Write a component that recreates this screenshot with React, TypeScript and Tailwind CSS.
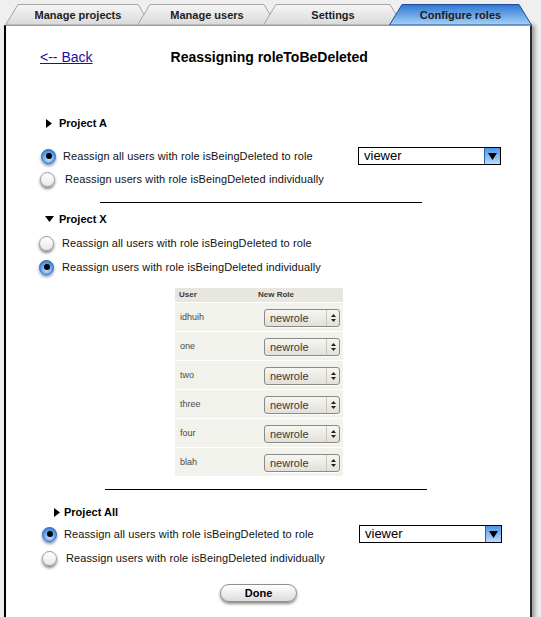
import React from 'react';

const sans = "font-['Liberation_Sans',Arial,sans-serif]";

function Tab({ label, active, w, first }: { label: string; active?: boolean; w: number; first?: boolean }) {
  return (
    <div className={`relative h-[21px] flex items-center justify-center ${first ? '' : '-ml-[14px]'} ${active ? 'z-10' : ''}`} style={{ width: w }}>
      <svg className="absolute inset-0" width={w} height={21} viewBox={`0 0 ${w} 21`}>
        <defs>
          <linearGradient id="tabGray" x1="0" y1="0" x2="0" y2="1">
            <stop offset="0" stopColor="#f6f6f6" />
            <stop offset="1" stopColor="#d9d9d9" />
          </linearGradient>
          <linearGradient id="tabBlue" x1="0" y1="0" x2="0" y2="1">
            <stop offset="0" stopColor="#2f76d2" />
            <stop offset="1" stopColor="#a6d2f7" />
          </linearGradient>
        </defs>
        <polygon
          points={`0.5,21 13,0.5 ${w - 13},0.5 ${w - 0.5},21`}
          fill={active ? 'url(#tabBlue)' : 'url(#tabGray)'}
          stroke={active ? '#1d4d93' : '#a4a4a4'}
          strokeWidth="1"
        />
      </svg>
      <span className={`relative pt-[2px] text-[11px] font-bold text-[#1c1c1c] ${sans}`}>{label}</span>
    </div>
  );
}

function Radio({ checked }: { checked?: boolean }) {
  if (checked) {
    return (
      <div className="w-[15px] h-[15px] rounded-full border border-[#2b5ea5] bg-[radial-gradient(circle_at_50%_70%,#c4e2fb_0%,#5d9fe6_55%,#2e6fc4_100%)] shadow-[0_2px_3px_rgba(20,60,140,0.55)] flex items-center justify-center shrink-0">
        <div className="w-[6px] h-[6px] rounded-full bg-black" />
      </div>
    );
  }
  return (
    <div className="w-[15px] h-[15px] rounded-full border border-[#9a9a9a] bg-[linear-gradient(#ffffff,#e9e9e9)] shadow-[0_2px_3px_rgba(0,0,0,0.5)] shrink-0" />
  );
}

function AquaSelect({ value }: { value: string }) {
  return (
    <div className="w-[143px] h-[18px] border border-black bg-white flex items-stretch">
      <span className={`flex-1 pl-[5px] text-[13px] leading-[16px] text-black ${sans}`}>{value}</span>
      <div className="w-[16px] border-l border-[#2a5ea5] bg-[linear-gradient(#4d95e6,#b9dcfb)] flex items-center justify-center">
        <svg width="9" height="7" viewBox="0 0 9 7"><polygon points="0,0 9,0 4.5,7" fill="#000" /></svg>
      </div>
    </div>
  );
}

function SmallSelect() {
  return (
    <div className="w-[76px] h-[18px] rounded-[3px] border border-[#8b8b86] bg-[linear-gradient(#f7f6f1,#e2e0d8)] flex items-stretch shadow-[0_1px_0_rgba(255,255,255,0.8)]">
      <span className={`flex-1 pl-[5px] text-[11px] leading-[16px] text-[#3a3a3a] ${sans}`}>newrole</span>
      <div className="w-[13px] border-l border-[#c9c7bf] flex flex-col items-center justify-center gap-[2px]">
        <svg width="5" height="3" viewBox="0 0 5 3"><polygon points="2.5,0 5,3 0,3" fill="#222" /></svg>
        <svg width="5" height="3" viewBox="0 0 5 3"><polygon points="0,0 5,0 2.5,3" fill="#222" /></svg>
      </div>
    </div>
  );
}

function Right() {
  return <svg width="6" height="9" viewBox="0 0 6 9"><polygon points="0,0 6,4.5 0,9" fill="#000" /></svg>;
}
function Down() {
  return <svg width="9" height="6" viewBox="0 0 9 6"><polygon points="0,0 9,0 4.5,6" fill="#000" /></svg>;
}

const users = ['idhuih', 'one', 'two', 'three', 'four', 'blah'];

export default function App() {
  const label = `text-[11px] tracking-[0.1px] text-[#111] ${sans}`;
  return (
    <div className="w-[541px] h-[617px] overflow-hidden bg-[#efefef]">
      {/* Tabs */}
      <div className="h-[25px] pt-[4px] pl-[5px] flex items-end">
        <Tab label="Manage projects" w={146} first />
        <Tab label="Manage users" w={140} />
        <Tab label="Settings" w={140} />
        <Tab label="Configure roles" w={143} active />
      </div>

      {/* Panel */}
      <div className="ml-[4px] w-[528px] h-[600px] bg-white border-l-2 border-r-2 border-t border-l-black border-r-[#2a2a2a] border-t-[#9a9a9a] shadow-[3px_0_4px_rgba(0,0,0,0.35)] flex flex-col">
        {/* Back + title */}
        <div className="mt-[22px] h-[18px] flex items-center">
          <a href="#" className={`ml-[34px] text-[14px] text-[#1a0dab] underline ${sans}`}>&lt;-- Back</a>
          <span className={`ml-[78px] text-[14px] font-bold text-black ${sans}`}>Reassigning roleToBeDeleted</span>
        </div>

        {/* Project A */}
        <div className="mt-[50px] h-[14px] pl-[40px] flex items-center gap-[7px]">
          <Right />
          <span className={`text-[11px] font-bold text-black ${sans}`}>Project A</span>
        </div>
        <div className="mt-[17px] h-[18px] pl-[35px] pr-[29px] flex items-center">
          <Radio checked />
          <span className={`ml-[7px] ${label}`}>Reassign all users with role isBeingDeleted to role</span>
          <div className="ml-auto"><AquaSelect value="viewer" /></div>
        </div>
        <div className="mt-[6px] h-[16px] pl-[34px] flex items-center">
          <Radio />
          <span className={`ml-[10px] ${label}`}>Reassign users with role isBeingDeleted individually</span>
        </div>

        <div className="mt-[15px] ml-[94px] w-[322px] h-px bg-black" />

        {/* Project X */}
        <div className="mt-[9px] h-[14px] pl-[39px] flex items-center gap-[5px]">
          <Down />
          <span className={`text-[11px] font-bold text-black ${sans}`}>Project X</span>
        </div>
        <div className="mt-[9px] h-[16px] pl-[33px] flex items-center">
          <Radio />
          <span className={`ml-[8px] ${label}`}>Reassign all users with role isBeingDeleted to role</span>
        </div>
        <div className="mt-[8px] h-[16px] pl-[33px] flex items-center">
          <Radio checked />
          <span className={`ml-[8px] ${label}`}>Reassign users with role isBeingDeleted individually</span>
        </div>

        {/* Table */}
        <div className="mt-[13px] ml-[169px] w-[168px] h-[188px] bg-[#f2f2ed] flex flex-col">
          <div className={`h-[15px] flex items-center bg-[#e8e7df] border-b border-white text-[8px] font-bold text-[#3a3a3a] ${sans}`}>
            <span className="pl-[4px] w-[83px]">User</span>
            <span>New Role</span>
          </div>
          {users.map((u, i) => (
            <div key={u} className={`flex-1 flex ${i < users.length - 1 ? 'border-b border-white' : ''}`}>
              <span className={`pl-[5px] pt-[8px] w-[89px] text-[9px] text-[#4a4a4a] ${sans}`}>{u}</span>
              <div className="pt-[6px]"><SmallSelect /></div>
            </div>
          ))}
        </div>

        <div className="mt-[13px] ml-[99px] w-[322px] h-px bg-black" />

        {/* Project All */}
        <div className="mt-[15px] h-[14px] pl-[48px] flex items-center gap-[4px]">
          <Right />
          <span className={`text-[11px] font-bold text-black ${sans}`}>Project All</span>
        </div>
        <div className="mt-[6px] h-[18px] pl-[36px] pr-[28px] flex items-center">
          <Radio checked />
          <span className={`ml-[7px] ${label}`}>Reassign all users with role isBeingDeleted to role</span>
          <div className="ml-auto"><AquaSelect value="viewer" /></div>
        </div>
        <div className="mt-[7px] h-[16px] pl-[36px] flex items-center">
          <Radio />
          <span className={`ml-[9px] ${label}`}>Reassign users with role isBeingDeleted individually</span>
        </div>

        {/* Done */}
        <div className="mt-[13px] ml-[214px]">
          <button className={`w-[77px] h-[18px] rounded-full border border-[#8e8e8e] bg-[linear-gradient(#ffffff,#dcdcdc)] shadow-[0_2px_3px_rgba(0,0,0,0.45)] text-[11px] font-bold text-black ${sans}`}>
            Done
          </button>
        </div>
      </div>
    </div>
  );
}
